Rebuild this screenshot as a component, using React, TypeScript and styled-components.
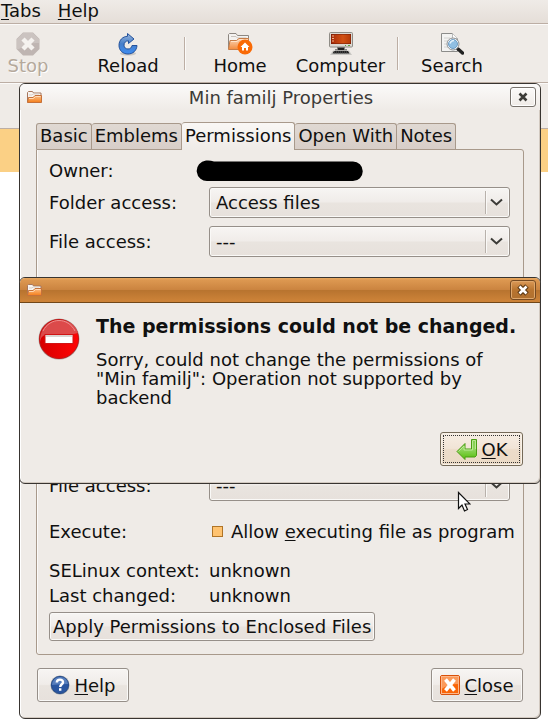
import React from "react";
import styled, { createGlobalStyle } from "styled-components";

const ink = "#101010";
const base = "#efebe7";
const raised = "linear-gradient(#f7f5f3 0, #f0ece9 48%, #e9e4df 52%, #e7e1dc)";

const Global = createGlobalStyle`
  * { box-sizing: border-box; }
  body { margin: 0; background: #fff; color: ${ink}; font: 18px/19px "DejaVu Sans", sans-serif; }
  button, select, input { font: inherit; color: inherit; }
  svg { display: block; flex: none; }
  u { text-underline-offset: 2px; text-decoration-thickness: 1px; text-decoration-skip-ink: none; }
`;

const Page = styled.div`
  position: relative;
  min-height: 100vh;
  overflow: hidden;
`;

const MenuBar = styled.nav`
  display: flex;
  gap: 17px;
  height: 24px;
  padding: 1px 0 0 1px;
  background: linear-gradient(#efebe7, #e5ded8);
  border-bottom: 1px solid #bcaea4;
`;

const MenuItem = styled.button`
  border: 0;
  background: none;
  padding: 0;
  height: 19px;
`;

const ToolBar = styled.div`
  display: flex;
  align-items: flex-start;
  height: 59px;
  padding-top: 7px;
  background: ${base};
  border-top: 1px solid #fbfaf9;
  border-bottom: 1px solid #bcaea4;
`;

const Tool = styled.button<{ $width: number; $apart?: boolean }>`
  display: flex;
  flex-direction: column;
  align-items: center;
  flex: none;
  width: ${(p) => p.$width}px;
  margin-left: ${(p) => (p.$apart ? 21 : 0)}px;
  border: 0;
  padding: 0;
  background: none;
  white-space: nowrap;
  &:disabled { color: #b5a99c; text-shadow: 1px 1px #fff; }
`;

const ToolSeparator = styled.div`
  flex: none;
  width: 2px;
  height: 33px;
  margin: 5px 5px 0;
  background: linear-gradient(90deg, #bcaea4 50%, #fbfaf9 50%);
`;

const LocationBar = styled.div`
  height: 46px;
  background: ${base};
  border-top: 1px solid #fbfaf9;
  border-bottom: 1px solid #bcaea4;
`;

const Notice = styled.div`
  height: 43px;
  background: #fbd085;
`;

const Window = styled.section<{ $top: number }>`
  position: absolute;
  left: 19px;
  right: 7px;
  top: ${(p) => p.$top}px;
  border: 1px solid #383430;
  border-radius: 6px;
  background: ${base};
  box-shadow: inset -1px -1px #d2c9c0, inset 1px 0 #fff;
`;

const TitleBar = styled.header<{ $active?: boolean }>`
  display: grid;
  grid-template-columns: 26px 1fr 26px;
  align-items: center;
  height: ${(p) => (p.$active ? 25 : 26)}px;
  padding: 0 4px 0 6px;
  border-radius: 5px 5px 0 0;
  color: #3c3b37;
  text-align: center;
  background: ${(p) =>
    p.$active
      ? "linear-gradient(#e8a860 0, #dc9750 10%, #cb8440 48%, #b8742f 52%, #cc8238 94%)"
      : "linear-gradient(#fbfaf9, #efebe7)"};
  border-bottom: ${(p) => (p.$active ? "1px solid #714718" : "0")};
`;

const Title = styled.h1`
  margin: 0;
  font-size: 18px;
  font-weight: 400;
  line-height: 19px;
`;

const WindowButton = styled.button<{ $active?: boolean }>`
  display: grid;
  place-items: center;
  grid-column: 3;
  width: 26px;
  height: 20px;
  padding: 0;
  border: 1px solid ${(p) => (p.$active ? "#754a22" : "#77726c")};
  border-radius: 3px;
  background: ${(p) => (p.$active ? "linear-gradient(#dc9a58, #b8742f 50%, #b0702f)" : "linear-gradient(#fbfaf9, #efebe7)")};
  box-shadow: inset 0 0 0 1px ${(p) => (p.$active ? "#dfa76b" : "#fff")};
`;

const Body = styled.div`
  padding: 12px 16px 16px;
`;

const Tabs = styled.div`
  display: flex;
  align-items: flex-end;
  height: 27px;
`;

const Tab = styled.button<{ $active?: boolean }>`
  position: relative;
  flex: none;
  height: ${(p) => (p.$active ? 28 : 26)}px;
  margin-bottom: ${(p) => (p.$active ? -1 : 0)}px;
  padding: 0 3px 2px;
  border: 1px solid #a8998b;
  border-bottom: 0;
  border-radius: 3px 3px 0 0;
  background: ${(p) => (p.$active ? "linear-gradient(#f9f7f5, #efebe7)" : "linear-gradient(#e0d9d3, #d8cec8)")};
  white-space: nowrap;
  & + & { border-left-width: 0; }
`;

const Panel = styled.div`
  display: flex;
  flex-direction: column;
  align-items: stretch;
  padding: 8px 13px 13px 12px;
  border: 1px solid #a8998b;
  border-radius: 0 3px 3px 3px;
  box-shadow: inset 1px 0 #fbfaf9;
`;

const Field = styled.div<{ $height: number; $label?: number }>`
  display: grid;
  grid-template-columns: ${(p) => p.$label ?? 160}px minmax(0, 1fr);
  align-items: center;
  height: ${(p) => p.$height}px;
  white-space: nowrap;
`;

const CoveredRows = styled.div`
  height: 205px;
`;

const ComboBox = styled.div`
  position: relative;
  svg { position: absolute; right: 0; top: 0; pointer-events: none; }
`;

const Select = styled.select`
  display: block;
  appearance: none;
  width: 100%;
  height: 31px;
  padding: 0 32px 0 6px;
  border: 1px solid #968f89;
  border-radius: 3px;
  background: ${raised};
  box-shadow: inset 0 0 0 1px #faf9f7;
`;

const Check = styled.label`
  display: flex;
  align-items: center;
  gap: 8px;
  padding-left: 3px;
`;

const CheckBox = styled.input`
  appearance: none;
  flex: none;
  width: 11px;
  height: 11px;
  margin: 0;
  border: 1px solid #b07426;
  background: #ffc370;
`;

const Push = styled.button<{ $width?: number; $focus?: boolean }>`
  display: flex;
  align-items: center;
  justify-content: center;
  gap: 4px;
  height: 34px;
  min-width: ${(p) => p.$width ?? 92}px;
  padding: 0 3px;
  border: 1px solid ${(p) => (p.$focus ? "#756a58" : "#968f89")};
  border-radius: 3px;
  background: ${(p) => (p.$focus ? "linear-gradient(#f7eee4 0, #f1e4d6 48%, #ecdcca 52%, #ebdac5)" : raised)};
  box-shadow: inset 0 0 0 1px ${(p) => (p.$focus ? "#f8f1e8" : "#faf9f7")};
  outline: ${(p) => (p.$focus ? "1px dotted #333" : "0")};
  outline-offset: -4px;
  white-space: nowrap;
`;

const ApplyButton = styled(Push)`
  align-self: flex-start;
  height: 29px;
  margin-top: 4px;
`;

const Actions = styled.div`
  display: flex;
  justify-content: space-between;
  padding: 13px 1px 0;
`;

const DialogActions = styled.div`
  display: flex;
  justify-content: flex-end;
  padding: 25px 17px 17px;
`;

const Message = styled.div`
  display: grid;
  grid-template-columns: 42px minmax(0, 1fr);
  gap: 16px;
  padding: 13px 15px 0 18px;
  svg { margin-top: 2px; }
`;

const Heading = styled.h2`
  margin: 0;
  font-size: 19px;
  line-height: 20px;
  white-space: nowrap;
`;

const Text = styled.p`
  margin: 14px 0 0;
`;

const Pointer = styled.svg`
  position: absolute;
  left: 457px;
  top: 491px;
`;

const CloseMark = ({ active }: { active?: boolean }) => (
  <svg width="12" height="12" viewBox="0 0 12 12" fill="none">
    {active && <path d="M2 2l8 8M10 2l-8 8" stroke="#5f3a14" strokeWidth="5" />}
    <path d="M2.5 2.5l7 7M9.5 2.5l-7 7" stroke={active ? "#fff" : "#3c3b37"} strokeWidth="2.6" />
  </svg>
);

const FolderMark = () => (
  <svg width="17" height="14" viewBox="0 0 17 14">
    <path d="M1.5 12V2.5l1-1h4l1 1.5h7.5V12z" fill="#f8f4f0" stroke="#a7765c" />
    <path d="M3 5h3l1-1h6" fill="none" stroke="#d9cfc7" />
    <path d="M1.5 12.5l1-5h4.5l2-2h6.500v7z" fill="url(#folderFill)" stroke="#c5713a" />
    <path d="M3 8.500h4.500l2-2h5" fill="none" stroke="#ffd9b4" />
    <defs><linearGradient id="folderFill" x2="0" y2="1"><stop stopColor="#fbc28c" /><stop offset="1" stopColor="#f57d18" /></linearGradient></defs>
  </svg>
);

const StopIcon = () => (
  <svg width="24" height="24" viewBox="0 0 24 24">
    <path d="M7 .5h10L23.500 7v10L17 23.500H7L.5 17V7z" fill="#bfb5b2" />
    <path d="M7 1h10l6 6v4q-12-1-20 6L1 17V7z" fill="#cbc3c0" />
    <path d="M7 7l10 10M17 7L7 17" stroke="#f5f2ef" strokeWidth="4.500" />
  </svg>
);

const ReloadIcon = () => (
  <svg width="24" height="24" viewBox="0 0 24 24">
    <ellipse cx="12" cy="21.500" rx="8" ry="2" fill="#000" opacity=".15" />
    <path d="M11.500 1.500l6.500 5.500-5.500 4.500V8.800c-3 0-4.500 2-4.500 4.400 0 2.600 2 3.800 4 3.800 2.500 0 3.600-1.500 4-3.500h5c-.3 5-4 8.500-9 8.500-5.300 0-9-3.700-9-8.700 0-5.300 3.800-8.800 8.500-9z" fill="url(#reloadFill)" stroke="#23519b" strokeLinejoin="round" />
    <defs><linearGradient id="reloadFill" x2="0" y2="1"><stop stopColor="#9ab6dc" /><stop offset=".5" stopColor="#477fc9" /><stop offset="1" stopColor="#3d8cf2" /></linearGradient></defs>
  </svg>
);

const HomeIcon = () => (
  <svg width="26" height="24" viewBox="0 0 26 24">
    <path d="M1.500 16.500v-14l1-1H9l1.500 2H21.500v13z" fill="#f4f2f0" stroke="#8d8781" />
    <path d="M4 4.500h5l1.500 1.500h9" fill="none" stroke="#c9c3bd" />
    <path d="M1.500 17.500l1.500-9h6.500l2.500-2h9.500v11z" fill="url(#homeFill)" stroke="#c77c46" />
    <path d="M4 9.500h6l2.500-2h8" fill="none" stroke="#ffe3c9" />
    <circle cx="18" cy="15" r="7.500" fill="#f96a06" />
    <path d="M18 10.500l4.500 4.500H21v3.500h-2V16h-2v2.500h-2V15h-1.500z" fill="#fff" />
    <defs><linearGradient id="homeFill" x2="0" y2="1"><stop stopColor="#fad7b8" /><stop offset="1" stopColor="#f38b3d" /></linearGradient></defs>
  </svg>
);

const ComputerIcon = () => (
  <svg width="26" height="24" viewBox="0 0 26 24">
    <rect x="1.500" y=".5" width="23" height="14.500" rx="1" fill="#dad8d3" stroke="#8f8c86" />
    <rect x="3" y="2" width="20" height="10" fill="#6c1804" />
    <rect x="3.500" y="2.500" width="19" height="9" fill="url(#screenFill)" />
    <path d="M4 4h2M4 6.500h2M4 9h2" stroke="#f0b18c" />
    <path d="M17 13.500h1M20 13.500h2" stroke="#5ca340" />
    <path d="M9 15.500h8l-1 2h3v1H7v-1h3z" fill="#222" />
    <path d="M5 18.500h16l3 4.500H2z" fill="#c9c7c3" />
    <path d="M6 19h14l1.500 2.500h-17z" fill="#222" />
    <path d="M6 20h14M5 21.500h16" stroke="#888" strokeDasharray="1 1" strokeWidth=".6" />
    <defs><linearGradient id="screenFill"><stop stopColor="#a92c09" /><stop offset=".6" stopColor="#d25114" /><stop offset="1" stopColor="#b53a08" /></linearGradient></defs>
  </svg>
);

const SearchIcon = () => (
  <svg width="24" height="24" viewBox="0 0 24 24">
    <path d="M1.500 1.500h11l5 5v13h-16z" fill="#f3f3f2" stroke="#8c8c8a" />
    <path d="M12.500 1.500v5h5" fill="#fff" stroke="#bbb" />
    <path d="M4 6h6M4 9h4M4 12h4M4 15h5" stroke="#d2d2d0" />
    <path d="M18 17l4.500 4" stroke="#222" strokeWidth="3.500" strokeLinecap="round" />
    <circle cx="13" cy="12" r="6" fill="#fff" stroke="#8d9194" />
    <circle cx="13" cy="12" r="4.500" fill="#90bfe3" stroke="#6d9cc4" />
    <path d="M10 11.500q1-3 4-3" fill="none" stroke="#e4f2fc" strokeWidth="1.500" />
  </svg>
);

const ErrorIcon = () => (
  <svg width="42" height="42" viewBox="0 0 42 42">
    <circle cx="21" cy="21" r="20.500" fill="#a9a29e" />
    <circle cx="21" cy="21" r="19.500" fill="url(#errorFill)" stroke="#c21414" />
    <path d="M2 24C4 10 22 20 40 15 36-3 2-4 2 24z" fill="#d95757" opacity=".85" />
    <path d="M5 13C12-1 30-1 37 13" fill="none" stroke="#ee8d8d" />
    <rect x="7" y="16.500" width="28" height="9" fill="#fff" stroke="#d01515" />
    <path d="M8 18h26" stroke="#d9d5d2" strokeWidth="2" />
    <defs><linearGradient id="errorFill"><stop stopColor="#d60000" /><stop offset="1" stopColor="#ff0505" /></linearGradient></defs>
  </svg>
);

const OkIcon = () => (
  <svg width="22" height="22" viewBox="0 0 22 22">
    <path d="M15.500 1.500h5v16l-1.500 1.500H9v2.500L1 13.500 9 5.500V11h6.500z" fill="url(#okFill)" stroke="#4a9c12" strokeLinejoin="round" />
    <path d="M16.500 2.500h3V11M2.500 13.500L8 8v4h8.500V3" fill="none" stroke="#b9e993" />
    <defs><linearGradient id="okFill" x2="0" y2="1"><stop stopColor="#85cf50" /><stop offset=".5" stopColor="#90d55d" /><stop offset="1" stopColor="#55be08" /></linearGradient></defs>
  </svg>
);

const HelpIcon = () => (
  <svg width="20" height="20" viewBox="0 0 20 20">
    <circle cx="10" cy="10" r="9.500" fill="#8f969f" />
    <circle cx="10" cy="10" r="8.500" fill="#2a56a0" stroke="#234a8b" />
    <path d="M2 10Q3 2 10 2t8 7q-8 0-16 1z" fill="#587fbd" />
    <path d="M6.800 7.500C7 3.500 13.300 4 13 7.300c-.2 2-2.800 2-2.800 4.700M10.200 13.300v2.500" fill="none" stroke="#fff" strokeWidth="2.400" />
  </svg>
);

const CloseIcon = () => (
  <svg width="20" height="20" viewBox="0 0 20 20">
    <rect x=".5" y=".5" width="19" height="19" rx="1.500" fill="#fa6507" stroke="#d9510a" />
    <path d="M1.500 1.500h17V9q-10 0-17 5z" fill="#fb9a5b" />
    <rect x="1.500" y="1.500" width="17" height="17" fill="none" stroke="#fdb78a" />
    <path d="M5.500 4.500l9 11M14.500 4.500l-9 11" stroke="#fff" strokeWidth="3.600" />
  </svg>
);

function Combo({ id, value, label }: { id: string; value: string; label: string }) {
  return (
    <Field $height={39}>
      <label htmlFor={id}>{label}</label>
      <ComboBox>
        <Select id={id} defaultValue={value}><option>{value}</option></Select>
        <svg width="26" height="31" viewBox="0 0 26 31" fill="none">
          <path d="M1.500 4v23" stroke="#b8b1ab" />
          <path d="M2.500 4v23" stroke="#faf9f7" />
          <path d="M7 12.500l5.500 5 5.500-5" stroke="#3c3b37" strokeWidth="2" />
        </svg>
      </ComboBox>
    </Field>
  );
}

export default function App() {
  return (
    <Page>
      <Global />
      <MenuBar>
        <MenuItem><span><u>T</u>abs</span></MenuItem>
        <MenuItem><span><u>H</u>elp</span></MenuItem>
      </MenuBar>
      <ToolBar>
        <Tool $width={56} disabled><StopIcon />Stop</Tool>
        <Tool $width={102} $apart><ReloadIcon />Reload</Tool>
        <ToolSeparator />
        <Tool $width={98}><HomeIcon />Home</Tool>
        <Tool $width={103}><ComputerIcon />Computer</Tool>
        <ToolSeparator />
        <Tool $width={96}><SearchIcon />Search</Tool>
      </ToolBar>
      <LocationBar />
      <Notice />

      <Window $top={83}>
        <TitleBar>
          <FolderMark />
          <Title>Min familj Properties</Title>
          <WindowButton aria-label="Close window"><CloseMark /></WindowButton>
        </TitleBar>
        <Body>
          <Tabs role="tablist">
            <Tab role="tab">Basic</Tab>
            <Tab role="tab">Emblems</Tab>
            <Tab role="tab" aria-selected $active>Permissions</Tab>
            <Tab role="tab">Open With</Tab>
            <Tab role="tab">Notes</Tab>
          </Tabs>
          <Panel role="tabpanel">
            <Field $height={25} $label={147}>
              <span>Owner:</span>
              <svg width="168" height="22" viewBox="0 0 168 22">
                <path d="M10 .5q4-.5 8 1H157a9.500 9.500 0 0 1 0 19.500H12A10 10 0 0 1 10 .5z" fill="#000" />
              </svg>
            </Field>
            <Combo id="folder-access" label="Folder access:" value="Access files" />
            <Combo id="group-file-access" label="File access:" value="---" />
            <CoveredRows />
            <Combo id="others-file-access" label="File access:" value="---" />
            <Field $height={52}>
              <span>Execute:</span>
              <Check><CheckBox type="checkbox" /><span>Allow <u>e</u>xecuting file as program</span></Check>
            </Field>
            <Field $height={26}><span>SELinux context:</span><span>unknown</span></Field>
            <Field $height={25}><span>Last changed:</span><span>unknown</span></Field>
            <ApplyButton>Apply Permissions to Enclosed Files</ApplyButton>
          </Panel>
          <Actions>
            <Push><HelpIcon /><span><u>H</u>elp</span></Push>
            <Push><CloseIcon /><span><u>C</u>lose</span></Push>
          </Actions>
        </Body>
      </Window>

      <Window $top={277} role="alertdialog" aria-labelledby="alert-heading">
        <TitleBar $active>
          <FolderMark />
          <WindowButton $active aria-label="Close dialog"><CloseMark active /></WindowButton>
        </TitleBar>
        <Message>
          <ErrorIcon />
          <div>
            <Heading id="alert-heading">The permissions could not be changed.</Heading>
            <Text>Sorry, could not change the permissions of "Min familj": Operation not supported by backend</Text>
          </div>
        </Message>
        <DialogActions>
          <Push $focus $width={83}><OkIcon /><span><u>O</u>K</span></Push>
        </DialogActions>
      </Window>

      <Pointer width="14" height="22" viewBox="0 0 14 22">
        <path d="M1.500 1.500v16l3.500-3.500 2.500 6 3-1.500-2.500-5.500h5z" fill="#fff" stroke="#111" strokeWidth="1.200" />
      </Pointer>
    </Page>
  );
}
